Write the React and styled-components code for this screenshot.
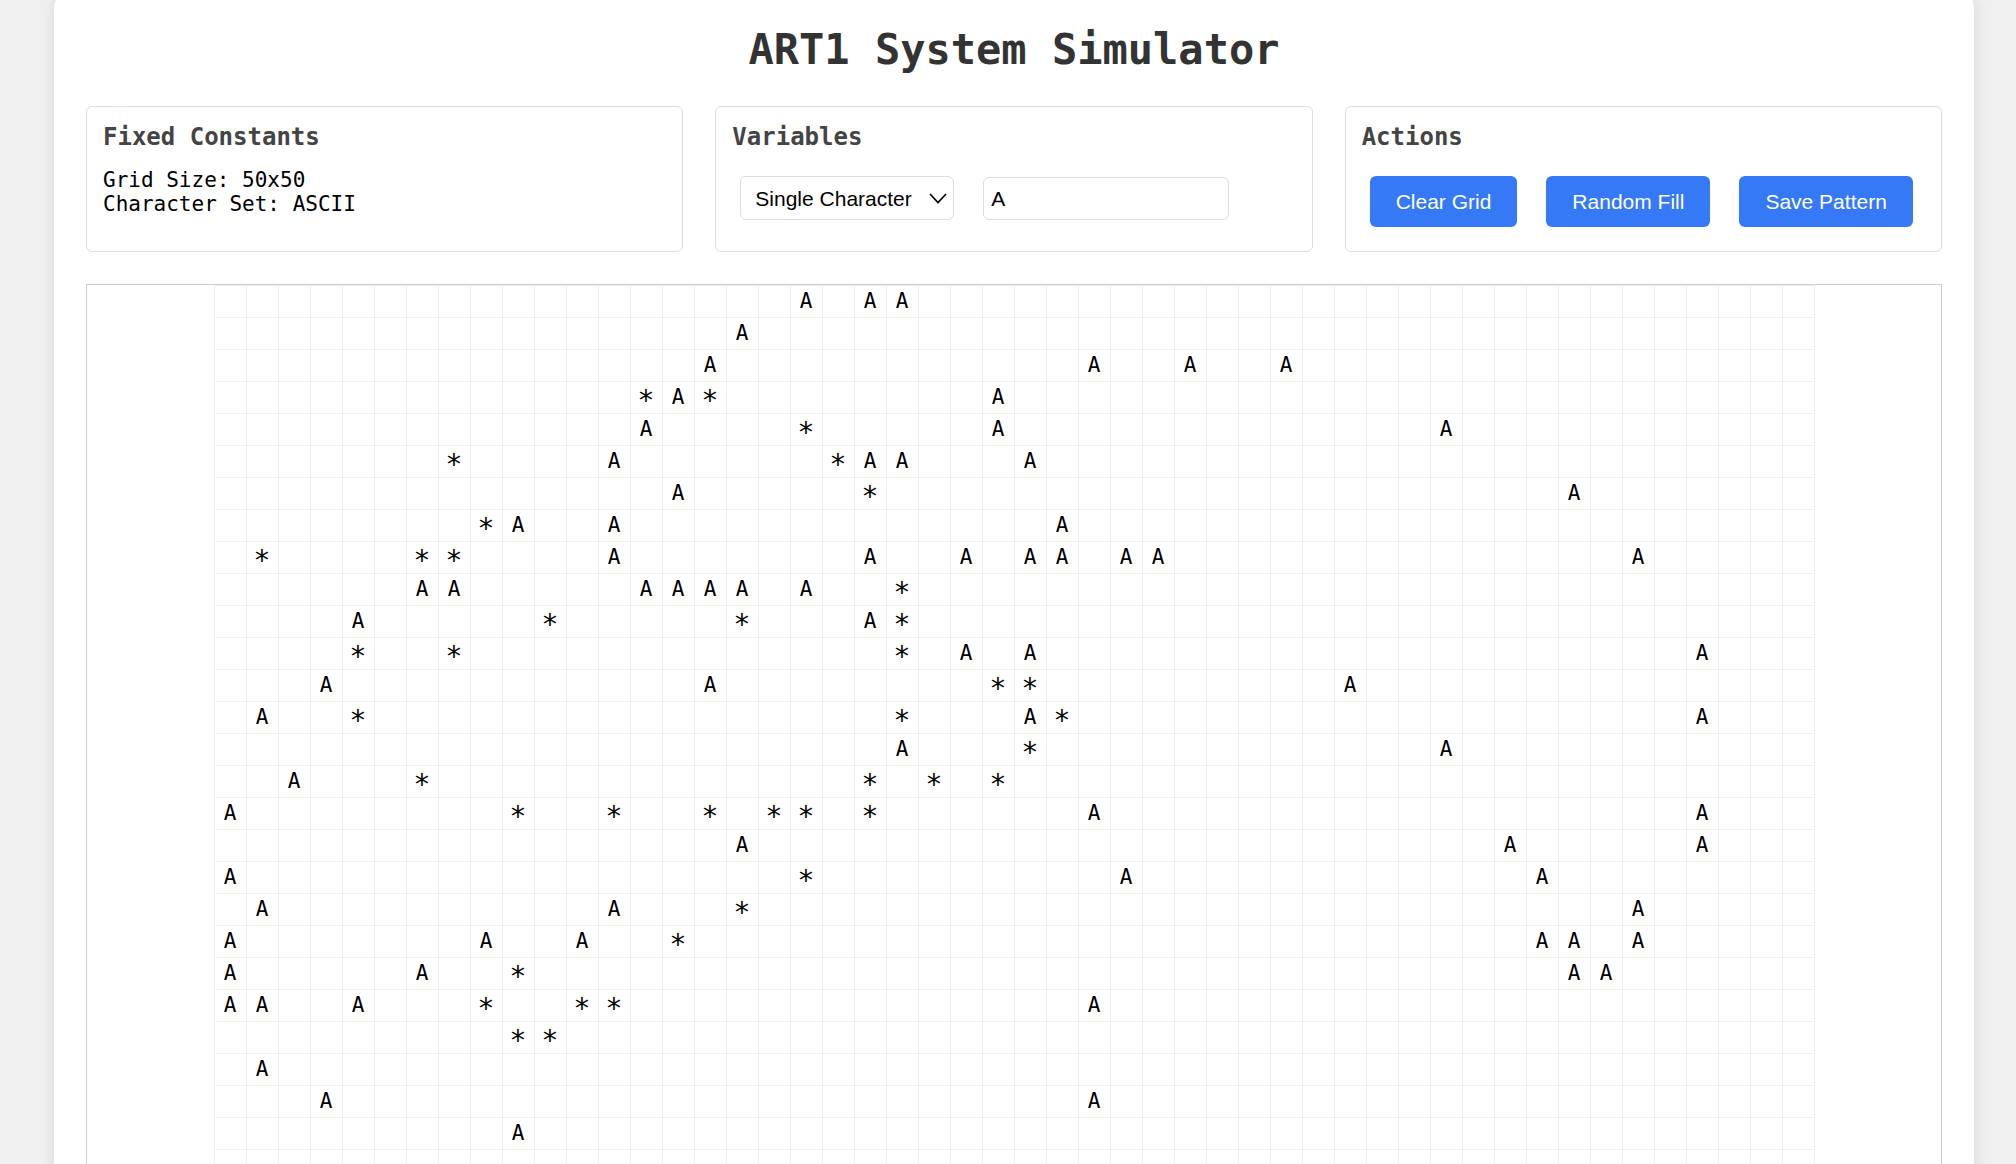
import React, { useState } from "react";
import styled, { createGlobalStyle } from "styled-components";

const MONO = '"DejaVu Sans Mono", "Liberation Mono", monospace';
const SANS = '"Liberation Sans", Arial, sans-serif';
const SIZE = 50;

const START = `A18 A20 A21
A16
A15 A27 A30 A33
*13 A14 *15 A24
A13 *18 A24 A38
*7 A12 *19 A20 A21 A25
A14 *20 A42
*8 A9 A12 A26
*1 *6 *7 A12 A20 A23 A25 A26 A28 A29 A44
A6 A7 A13 A14 A15 A16 A18 *21
A4 *10 *16 A20 *21
*4 *7 *21 A23 A25 A46
A3 A15 *24 *25 A35
A1 *4 *21 A25 *26 A46
A21 *25 A38
A2 *6 *20 *22 *24
A0 *9 *12 *15 *17 *18 *20 A27 A46
A16 A40 A46
A0 *18 A28 A41
A1 A12 *16 A44
A0 A8 A11 *14 A41 A42 A44
A0 A6 *9 A42 A43
A0 A1 A4 *8 *11 *12 A27
*9 *10
A1
A3 A27
A9`;

const emptyGrid = () => Array(SIZE * SIZE).fill("");

function readPattern(text) {
  const cells = emptyGrid();
  text.split("\n").forEach((line, row) => {
    line.split(" ").forEach((mark) => {
      cells[row * SIZE + Number(mark.slice(1))] = mark[0];
    });
  });
  return cells;
}

const GlobalStyle = createGlobalStyle`
  *, *::before, *::after { box-sizing: border-box; }
  body {
    margin: 0;
    background: #f0f0f0;
    color: #000;
    font: 21px/24px ${MONO};
  }
`;

const Page = styled.div`
  height: 100vh;
  overflow: hidden;
  padding: 0 42px 0 54px;
`;

const Sheet = styled.main`
  margin-top: -6px;
  padding: 32px;
  background: #fff;
  border-radius: 13px;
  box-shadow: 0 0 16px rgba(0, 0, 0, 0.1);
`;

const Title = styled.h1`
  margin: 0 0 32px;
  color: #333;
  font-size: 42px;
  line-height: 48px;
  text-align: center;
`;

const Panels = styled.div`
  display: grid;
  grid-template-columns: repeat(3, minmax(0, 1fr));
  gap: 32px;
  margin-bottom: 32px;
`;

const Panel = styled.section`
  min-height: 146px;
  padding: 16px;
  border: 1px solid #ddd;
  border-radius: 6px;
`;

const PanelTitle = styled.h2`
  margin: 0 0 16px;
  color: #444;
  font-size: 24px;
  line-height: 29px;
`;

const Line = styled.div`
  line-height: 24px;
`;

const Controls = styled.div`
  display: flex;
  align-items: flex-end;
  gap: 29px;
  padding: 8px 8px 0;
`;

const SelectBox = styled.div`
  position: relative;
  display: flex;
`;

const Select = styled.select`
  appearance: none;
  width: 214px;
  height: 44px;
  padding: 0 40px 0 14px;
  border: 1px solid #ddd;
  border-radius: 6px;
  background: #fff;
  color: #000;
  font: 21px ${SANS};
`;

const Chevron = styled.svg`
  position: absolute;
  right: 7px;
  top: 17px;
  width: 18px;
  height: 11px;
  pointer-events: none;
`;

const CharInput = styled.input`
  width: 246px;
  height: 43px;
  padding: 0 7px;
  border: 1px solid #ddd;
  border-radius: 6px;
  background: #fff;
  color: #000;
  font: 21px ${SANS};
`;

const Button = styled.button`
  height: 51px;
  padding: 0 26px;
  border: 0;
  border-radius: 6px;
  background: #3579f6;
  color: #fff;
  font: 21px ${SANS};
  white-space: nowrap;
  cursor: pointer;
`;

const GridFrame = styled.div`
  display: flex;
  justify-content: center;
  border: 1px solid #ccc;
`;

const Grid = styled.div`
  display: grid;
  grid-template-columns: repeat(${SIZE}, 32px);
  grid-auto-rows: 32px;
  box-shadow: 1px 0 #eee;
`;

const Cell = styled.div`
  display: flex;
  align-items: center;
  justify-content: center;
  min-width: 0;
  min-height: 0;
  padding: ${(p) => (p.$star ? "7px 1px 0 0" : "0 1px 2px 0")};
  border: solid #eee;
  border-width: 1px 0 0 1px;
  font-size: ${(p) => (p.$star ? "28px" : "21px")};
  cursor: pointer;
`;

export default function App() {
  const [cells, setCells] = useState(() => readPattern(START));
  const [mode, setMode] = useState("single");
  const [char, setChar] = useState("A");

  const pick = () =>
    mode === "single" ? char : String.fromCharCode(33 + Math.floor(Math.random() * 94));
  const paint = (index) =>
    setCells((old) => old.map((value, i) => (i === index ? pick() : value)));
  const fill = () => setCells(emptyGrid().map(() => (Math.random() < 0.1 ? pick() : "")));
  const save = () => window.localStorage.setItem("pattern", JSON.stringify(cells));

  return (
    <>
      <GlobalStyle />
      <Page>
        <Sheet>
          <Title>ART1 System Simulator</Title>
          <Panels>
            <Panel>
              <PanelTitle>Fixed Constants</PanelTitle>
              <Line>Grid Size: 50x50</Line>
              <Line>Character Set: ASCII</Line>
            </Panel>
            <Panel>
              <PanelTitle>Variables</PanelTitle>
              <Controls>
                <SelectBox>
                  <Select aria-label="Mode" value={mode} onChange={(e) => setMode(e.target.value)}>
                    <option value="single">Single Character</option>
                    <option value="random">Random</option>
                  </Select>
                  <Chevron viewBox="0 0 18 11" fill="none" stroke="#000" strokeWidth="1.7" aria-hidden="true">
                    <path d="M1 1l8 8.500 8-8.500" />
                  </Chevron>
                </SelectBox>
                <CharInput
                  aria-label="Character"
                  maxLength={1}
                  value={char}
                  onChange={(e) => setChar(e.target.value)}
                />
              </Controls>
            </Panel>
            <Panel>
              <PanelTitle>Actions</PanelTitle>
              <Controls>
                <Button onClick={() => setCells(emptyGrid())}>Clear Grid</Button>
                <Button onClick={fill}>Random Fill</Button>
                <Button onClick={save}>Save Pattern</Button>
              </Controls>
            </Panel>
          </Panels>
          <GridFrame>
            <Grid>
              {cells.map((value, i) => (
                <Cell key={i} $star={value === "*"} onClick={() => paint(i)}>{value}</Cell>
              ))}
            </Grid>
          </GridFrame>
        </Sheet>
      </Page>
    </>
  );
}
